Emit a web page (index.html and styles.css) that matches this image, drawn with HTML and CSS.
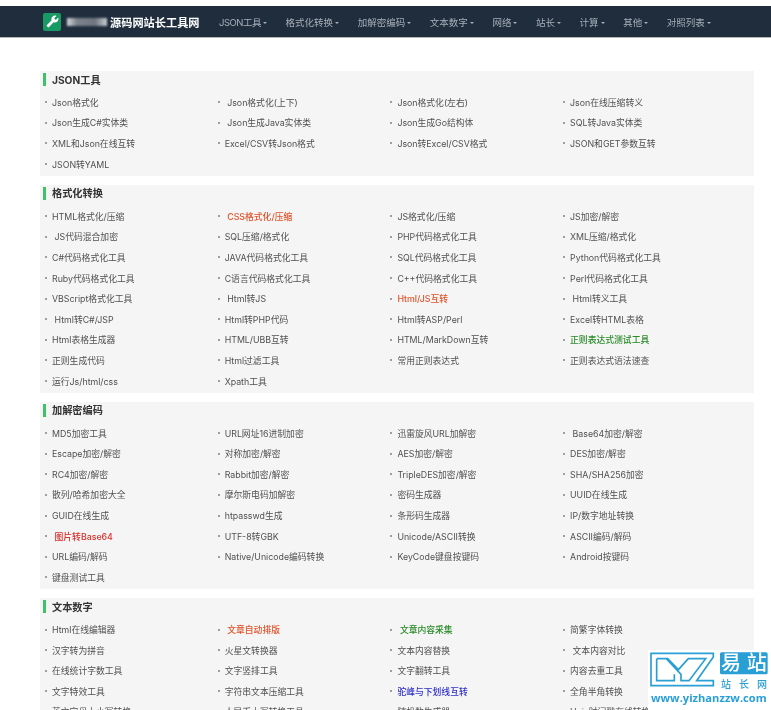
FILE: index.html
```html
<!DOCTYPE html>
<html lang="zh-CN">
<head>
<meta charset="utf-8">
<title>源码网站长工具网</title>
<link rel="stylesheet" href="styles.css">
</head>
<body>
<div class="page">
<header class="nav">
  <a class="brand">
    <span class="brand-icon"><svg viewBox="0 0 24 24" width="13" height="13" transform="scale(-1,1)"><path fill="#fff" d="M22.7 19l-9.1-9.1c.9-2.3.4-5-1.5-6.9-2-2-5-2.4-7.4-1.3L9 6 6 9 1.6 4.7C.4 7.1.9 10.1 2.9 12.1c1.9 1.9 4.6 2.4 6.9 1.5l9.1 9.1c.4.4 1 .4 1.4 0l2.3-2.3c.5-.4.5-1.1.1-1.4z"/></svg></span>
    <span class="smudge"></span>
    <span class="brand-text">源码网站长工具网</span>
  </a>
  <nav class="menu">
    <a>JSON工具<i></i></a><a>格式化转换<i></i></a><a>加解密编码<i></i></a><a>文本数字<i></i></a><a>网络<i></i></a><a>站长<i></i></a><a>计算<i></i></a><a>其他<i></i></a><a>对照列表<i></i></a>
  </nav>
</header>

<main class="content">
  <section class="panel">
    <h2>JSON工具</h2>
    <ul>
      <li>Json格式化</li><li class="sp">Json格式化(上下)</li><li>Json格式化(左右)</li><li>Json在线压缩转义</li>
      <li>Json生成C#实体类</li><li class="sp">Json生成Java实体类</li><li>Json生成Go结构体</li><li>SQL转Java实体类</li>
      <li>XML和Json在线互转</li><li>Excel/CSV转Json格式</li><li>Json转Excel/CSV格式</li><li>JSON和GET参数互转</li>
      <li>JSON转YAML</li>
    </ul>
  </section>
  <section class="panel">
    <h2>格式化转换</h2>
    <ul>
      <li>HTML格式化/压缩</li><li class="sp red">CSS格式化/压缩</li><li>JS格式化/压缩</li><li>JS加密/解密</li>
      <li class="sp">JS代码混合加密</li><li>SQL压缩/格式化</li><li>PHP代码格式化工具</li><li>XML压缩/格式化</li>
      <li>C#代码格式化工具</li><li>JAVA代码格式化工具</li><li>SQL代码格式化工具</li><li>Python代码格式化工具</li>
      <li>Ruby代码格式化工具</li><li>C语言代码格式化工具</li><li>C++代码格式化工具</li><li>Perl代码格式化工具</li>
      <li>VBScript格式化工具</li><li class="sp">Html转JS</li><li class="red">Html/JS互转</li><li class="sp">Html转义工具</li>
      <li class="sp">Html转C#/JSP</li><li>Html转PHP代码</li><li>Html转ASP/Perl</li><li>Excel转HTML表格</li>
      <li>Html表格生成器</li><li>HTML/UBB互转</li><li>HTML/MarkDown互转</li><li class="green">正则表达式测试工具</li>
      <li>正则生成代码</li><li>Html过滤工具</li><li>常用正则表达式</li><li>正则表达式语法速查</li>
      <li>运行Js/html/css</li><li>Xpath工具</li>
    </ul>
  </section>
  <section class="panel">
    <h2>加解密编码</h2>
    <ul>
      <li>MD5加密工具</li><li>URL网址16进制加密</li><li>迅雷旋风URL加解密</li><li class="sp">Base64加密/解密</li>
      <li>Escape加密/解密</li><li>对称加密/解密</li><li>AES加密/解密</li><li>DES加密/解密</li>
      <li>RC4加密/解密</li><li>Rabbit加密/解密</li><li>TripleDES加密/解密</li><li>SHA/SHA256加密</li>
      <li>散列/哈希加密大全</li><li>摩尔斯电码加解密</li><li>密码生成器</li><li>UUID在线生成</li>
      <li>GUID在线生成</li><li>htpasswd生成</li><li>条形码生成器</li><li>IP/数字地址转换</li>
      <li class="sp crimson">图片转Base64</li><li>UTF-8转GBK</li><li>Unicode/ASCII转换</li><li>ASCII编码/解码</li>
      <li>URL编码/解码</li><li>Native/Unicode编码转换</li><li>KeyCode键盘按键码</li><li>Android按键码</li>
      <li>键盘测试工具</li>
    </ul>
  </section>
  <section class="panel">
    <h2>文本数字</h2>
    <ul>
      <li>Html在线编辑器</li><li class="sp red">文章自动排版</li><li class="sp green">文章内容采集</li><li>简繁字体转换</li>
      <li>汉字转为拼音</li><li>火星文转换器</li><li>文本内容替换</li><li class="sp">文本内容对比</li>
      <li>在线统计字数工具</li><li>文字竖排工具</li><li>文字翻转工具</li><li>内容去重工具</li>
      <li>文字特效工具</li><li>字符串文本压缩工具</li><li class="blue">驼峰与下划线互转</li><li>全角半角转换</li>
      <li>英文字母大小写转换</li><li>人民币大写转换工具</li><li>随机数生成器</li><li>Unix时间戳在线转换</li>
    </ul>
  </section>
</main>

<aside class="watermark">
  <svg viewBox="0 0 378 195" width="126" height="65">
    <rect x="9" y="15" width="369" height="180" fill="#fff"/>
    <g fill="none" stroke="#2a9fd6" stroke-width="5" stroke-linejoin="miter">
      <path d="M18 25H205V36L155 107H205V122H18Z"/>
      <path d="M35 41H68L100 74L130 41H182L132 107H108V88L64 41M35 41V107H88V88"/>
    </g>
    <rect class="wm-box" x="225" y="22" width="143" height="66" rx="5"/>
    <text class="wm-big" x="228" y="76">易</text>
    <text class="wm-big" x="305" y="76">站</text>
    <text class="wm-mid" x="228" y="128">站</text>
    <text class="wm-mid" x="282" y="128">长</text>
    <text class="wm-mid" x="336" y="128">网</text>
    <text class="wm-url" x="18" y="171" textLength="347" lengthAdjust="spacingAndGlyphs">www.yizhanzzw.com</text>
  </svg>
</aside>
</div>
</body>
</html>
```

FILE: styles.css
```css
html, body {
  margin: 0;
  padding: 0;
  height: 710px;
  overflow: hidden;
  background: #fff;
}

.page {
  position: relative;
  height: 710px;
  overflow: hidden;
  padding-top: 6px;
  box-sizing: border-box;
  font-family: Inter, "Noto Sans CJK SC", sans-serif;
  filter: blur(0.4px);
}

.nav {
  display: flex;
  align-items: center;
  height: 31px;
  padding-left: 43px;
  background: #1f2d3d;
  border-bottom: 1px solid #b4b6b8;
}

.brand {
  display: flex;
  align-items: center;
  width: 176px;
  flex: none;
}

.brand-icon {
  display: flex;
  align-items: center;
  justify-content: center;
  width: 18px;
  height: 18px;
  border-radius: 2px;
  background: #179a63;
}

.smudge {
  width: 40px;
  height: 8px;
  margin-left: 6px;
  background: linear-gradient(90deg, #d5d8dc 0, #7b828b 25%, #6f7680 70%, #c9cdd2 100%);
  filter: blur(1.2px);
}

.brand-text {
  margin-left: 3px;
  font-family: "Noto Sans CJK SC", sans-serif;
  font-size: 11.2px;
  font-weight: 700;
  color: #fff;
  white-space: nowrap;
}

.menu {
  display: flex;
  gap: 18.6px;
}

.menu a {
  display: flex;
  align-items: center;
  font-size: 9.5px;
  color: #a7afb8;
  white-space: nowrap;
}

.menu a:first-child {
  letter-spacing: -0.5px;
}

.menu i {
  width: 0;
  height: 0;
  margin-left: 2px;
  margin-top: 2px;
  border-left: 2.5px solid transparent;
  border-right: 2.5px solid transparent;
  border-top: 2.5px solid #a7afb8;
}

.content {
  display: flex;
  flex-direction: column;
  gap: 9px;
  width: 714px;
  margin: 33px 0 0 40px;
}

.panel {
  background: #f5f5f5;
  padding-bottom: 1.6px;
}

.panel h2 {
  display: flex;
  align-items: center;
  box-sizing: border-box;
  height: 21px;
  margin: 0;
  padding: 0 0 5px 12px;
  position: relative;
  font-size: 10.2px;
  font-weight: 700;
  color: #333;
}

.panel h2::before {
  content: "";
  position: absolute;
  left: 3px;
  top: 2px;
  width: 3px;
  height: 13px;
  background: #3ec267;
}

.panel ul {
  display: grid;
  grid-template-columns: repeat(4, 172.7px);
  grid-auto-rows: 20.6px;
  margin: 0;
  padding: 0 0 0 5px;
  list-style: none;
}

.panel li {
  display: flex;
  align-items: center;
  font-size: 8.8px;
  color: #505050;
  white-space: nowrap;
}

.panel li::before {
  content: "";
  flex: none;
  width: 2px;
  height: 2px;
  margin-right: 5px;
  border-radius: 50%;
  background: #808080;
}

.panel li.sp::before {
  margin-right: 7.5px;
}

.panel li.red { color: #e0532b; font-weight: 500; }
.panel li.crimson { color: #d9302c; font-weight: 500; }
.panel li.green { color: #2a8a2a; font-weight: 500; }
.panel li.blue { color: #3030cc; font-weight: 500; }

.watermark {
  position: absolute;
  left: 645px;
  top: 645px;
  width: 126px;
  height: 65px;
}

.watermark svg {
  display: block;
}

.wm-box { fill: #2a9fd6; }

.wm-big {
  font-family: "Noto Sans CJK SC", sans-serif;
  font-size: 60px;
  font-weight: 500;
  fill: #fff;
}

.wm-mid {
  font-family: "Noto Sans CJK SC", sans-serif;
  font-size: 30px;
  font-weight: 500;
  fill: #2a9fd6;
}

.wm-url {
  font-family: "Open Sans", sans-serif;
  font-size: 34px;
  font-weight: 700;
  fill: #2a9fd6;
}
```
